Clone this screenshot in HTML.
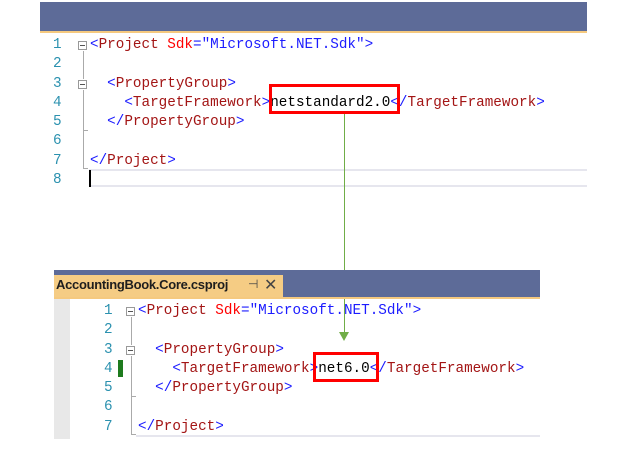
<!DOCTYPE html>
<html><head><meta charset="utf-8"><style>
*{margin:0;padding:0;box-sizing:border-box}
body{width:617px;height:451px;background:#fff;position:relative;overflow:hidden;font-family:"Liberation Mono",monospace;font-size:14.3px}
.abs{position:absolute}
.ln{position:absolute;color:#2b91af;font-size:14.3px;line-height:19.3px;white-space:pre}
.code{position:absolute;white-space:pre;line-height:19.3px;color:#000}
.t{color:#1c1cff}.n{color:#a31515}.a{color:#ff0000}.v{color:#1c1cff}
.fold{position:absolute;width:9px;height:9px;border:1px solid #999;background:#fff}
.fold:after{content:"";position:absolute;left:1px;top:3px;width:5px;height:1px;background:#555}
.red{position:absolute;border:3px solid #f00}
</style></head><body>
<!-- top panel -->
<div class="abs" style="left:40px;top:2px;width:547px;height:29px;background:#5d6b98"></div>
<div class="abs" style="left:40px;top:31px;width:547px;height:2px;background:#f5c97f"></div>
<div class="ln" style="left:53px;top:36px">1
2
3
4
5
6
7
8</div>
<div class="fold" style="left:78px;top:41px"></div>
<div class="fold" style="left:78px;top:80px"></div>
<div class="abs" style="left:83px;top:51px;width:1px;height:28px;background:#aaa"></div>
<div class="abs" style="left:83px;top:90px;width:1px;height:78px;background:#aaa"></div>
<div class="abs" style="left:83px;top:130px;width:5px;height:1px;background:#aaa"></div>
<div class="abs" style="left:83px;top:168px;width:5px;height:1px;background:#aaa"></div>
<div class="code" style="left:90px;top:36px"><span class="t">&lt;</span><span class="n">Project</span> <span class="a">Sdk</span><span class="t">="Microsoft.NET.Sdk"&gt;</span>

  <span class="t">&lt;</span><span class="n">PropertyGroup</span><span class="t">&gt;</span>
    <span class="t">&lt;</span><span class="n">TargetFramework</span><span class="t">&gt;</span>netstandard2.0<span class="t">&lt;/</span><span class="n">TargetFramework</span><span class="t">&gt;</span>
  <span class="t">&lt;/</span><span class="n">PropertyGroup</span><span class="t">&gt;</span>

<span class="t">&lt;/</span><span class="n">Project</span><span class="t">&gt;</span></div>
<div class="abs" style="left:89px;top:169px;width:498px;height:2px;background:#e6e6ee"></div>
<div class="abs" style="left:89px;top:185px;width:498px;height:2px;background:#e6e6ee"></div>
<div class="abs" style="left:89px;top:170px;width:2px;height:17px;background:#000"></div>
<div class="red" style="left:269px;top:84px;width:131px;height:30px"></div>

<!-- arrow -->
<div class="abs" style="left:344px;top:114px;width:1px;height:220px;background:#70ad47"></div>
<div class="abs" style="left:339px;top:332px;width:0;height:0;border-left:5.5px solid transparent;border-right:5.5px solid transparent;border-top:9px solid #70ad47"></div>

<!-- bottom panel -->
<div class="abs" style="left:54px;top:270px;width:486px;height:27px;background:#5d6b98"></div>
<div class="abs" style="left:54px;top:275px;width:229px;height:22px;background:#f5cc84"></div>
<div class="abs" style="left:54px;top:297px;width:486px;height:2px;background:#f5c97f"></div>
<div class="abs" style="left:56px;top:277px;font-family:'Liberation Sans',sans-serif;font-size:13px;font-weight:bold;color:#1e1e1e;letter-spacing:-0.3px">AccountingBook.Core.csproj</div>
<div class="abs" style="left:248px;top:277px;font-family:'Liberation Sans',sans-serif;font-size:12px;color:#444">⊣</div>
<div class="abs" style="left:264px;top:275px;font-family:'Liberation Sans',sans-serif;font-size:16px;color:#444">✕</div>
<div class="abs" style="left:54px;top:299px;width:16px;height:140px;background:#e8e8e8"></div>
<div class="abs" style="left:118px;top:360px;width:5px;height:17px;background:#1e7b1e"></div>
<div class="ln" style="left:104px;top:302px">1
2
3
4
5
6
7</div>
<div class="fold" style="left:126px;top:307px"></div>
<div class="fold" style="left:126px;top:346px"></div>
<div class="abs" style="left:131px;top:317px;width:1px;height:28px;background:#aaa"></div>
<div class="abs" style="left:131px;top:356px;width:1px;height:79px;background:#aaa"></div>
<div class="abs" style="left:131px;top:396px;width:5px;height:1px;background:#aaa"></div>
<div class="abs" style="left:131px;top:434px;width:5px;height:1px;background:#aaa"></div>
<div class="code" style="left:138px;top:302px"><span class="t">&lt;</span><span class="n">Project</span> <span class="a">Sdk</span><span class="t">="Microsoft.NET.Sdk"&gt;</span>

  <span class="t">&lt;</span><span class="n">PropertyGroup</span><span class="t">&gt;</span>
    <span class="t">&lt;</span><span class="n">TargetFramework</span><span class="t">&gt;</span>net6.0<span class="t">&lt;/</span><span class="n">TargetFramework</span><span class="t">&gt;</span>
  <span class="t">&lt;/</span><span class="n">PropertyGroup</span><span class="t">&gt;</span>

<span class="t">&lt;/</span><span class="n">Project</span><span class="t">&gt;</span></div>
<div class="abs" style="left:136px;top:435px;width:404px;height:2px;background:#e6e6ee"></div>
<div class="red" style="left:313px;top:352px;width:66px;height:30px"></div>
</body></html>
